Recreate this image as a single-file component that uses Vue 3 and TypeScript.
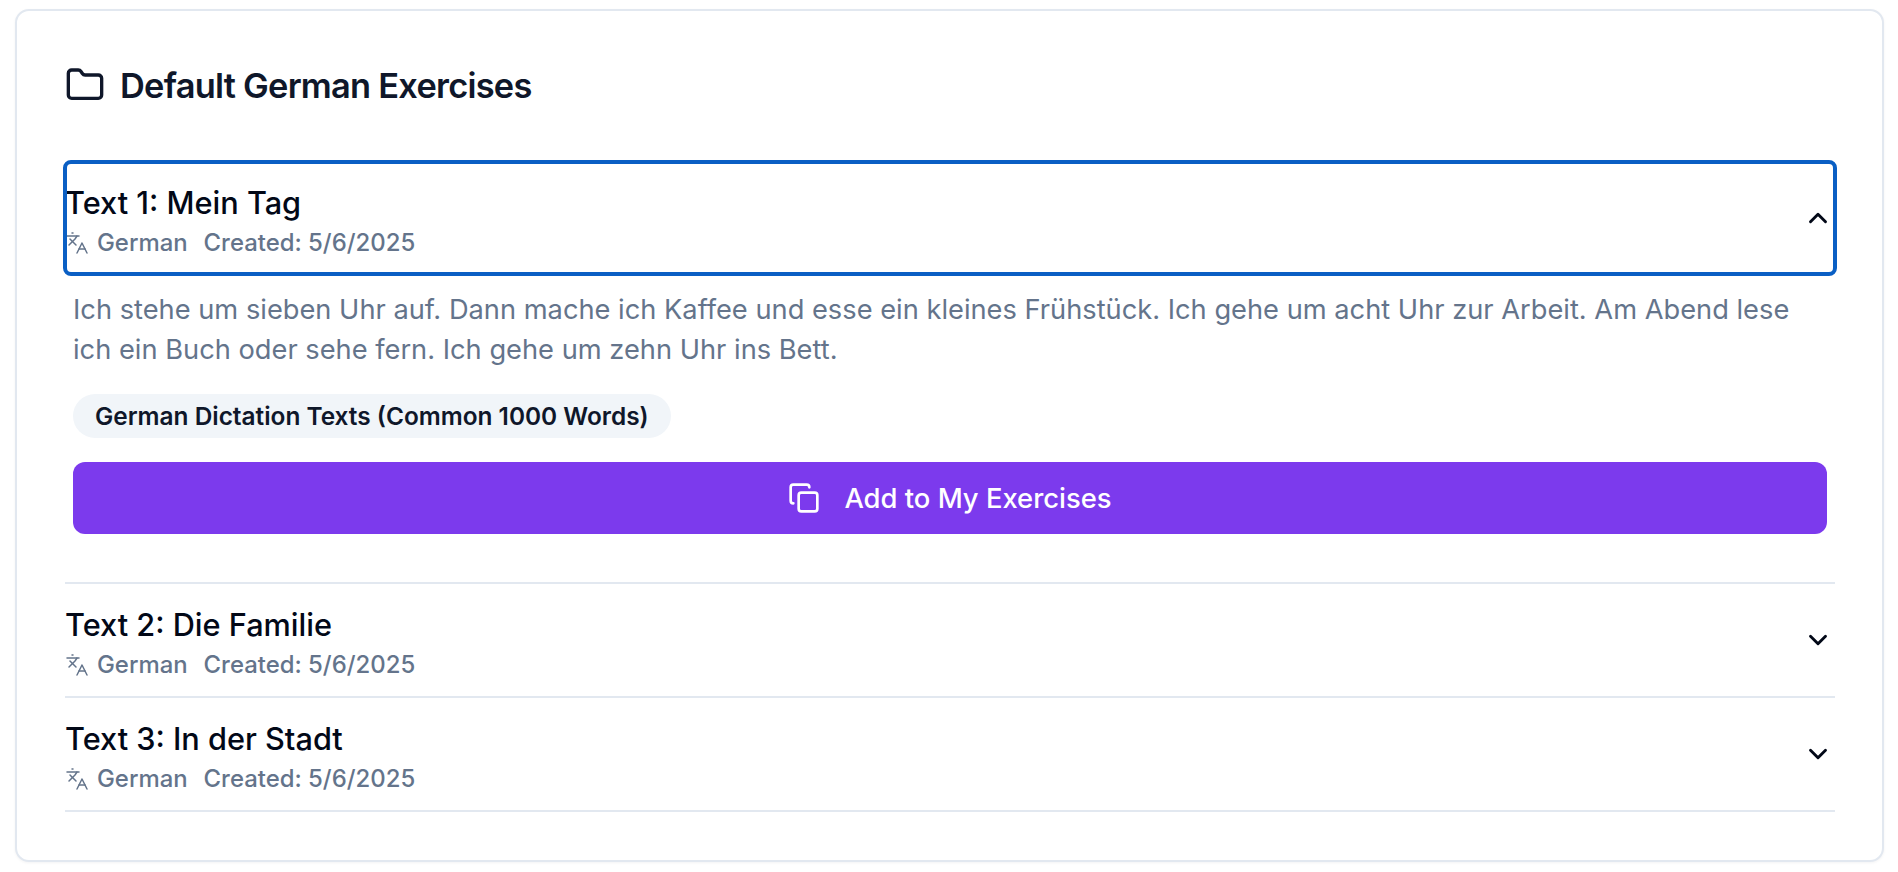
<script setup lang="ts">
interface Exercise {
  title: string
  open: boolean
}
const exercises: Exercise[] = [
  { title: 'Text 1: Mein Tag', open: true },
  { title: 'Text 2: Die Familie', open: false },
  { title: 'Text 3: In der Stadt', open: false },
]
</script>

<template>
  <main class="page">
    <section class="card">
      <h2 class="heading">
        <svg class="folder" viewBox="0 0 24 24" fill="none" stroke="currentColor" stroke-width="2" stroke-linecap="round" stroke-linejoin="round">
          <path d="M20 20a2 2 0 0 0 2-2V8a2 2 0 0 0-2-2h-7.9a2 2 0 0 1-1.69-.9L9.6 3.9A2 2 0 0 0 7.93 3H4a2 2 0 0 0-2 2v13a2 2 0 0 0 2 2Z" />
        </svg>
        <span>Default German Exercises</span>
      </h2>
      <div class="accordion">
        <div v-for="ex in exercises" :key="ex.title" class="item">
          <button class="trigger" :class="{ focused: ex.open }" type="button">
            <span class="info">
              <span class="title">{{ ex.title }}</span>
              <span class="meta">
                <svg class="lang" viewBox="0 0 24 24" fill="none" stroke="currentColor" stroke-width="2" stroke-linecap="round" stroke-linejoin="round">
                  <path d="m5 8 6 6" />
                  <path d="m4 14 6-6 2-3" />
                  <path d="M2 5h12" />
                  <path d="M7 2h1" />
                  <path d="m22 22-5-10-5 10" />
                  <path d="M14 18h6" />
                </svg>
                <span class="lang-name">German</span>
                <span>Created: 5/6/2025</span>
              </span>
            </span>
            <svg class="chevron" viewBox="0 0 24 24" fill="none" stroke="currentColor" stroke-width="2.3" stroke-linecap="round" stroke-linejoin="round">
              <path :d="ex.open ? 'm18 15-6-6-6 6' : 'm6 9 6 6 6-6'" />
            </svg>
          </button>
          <div v-if="ex.open" class="content">
            <p class="text">Ich stehe um sieben Uhr auf. Dann mache ich Kaffee und esse ein kleines Frühstück. Ich gehe um acht Uhr zur Arbeit. Am Abend lese ich ein Buch oder sehe fern. Ich gehe um zehn Uhr ins Bett.</p>
            <span class="badge">German Dictation Texts (Common 1000 Words)</span>
            <button class="add" type="button">
              <svg class="copy" viewBox="0 0 24 24" fill="none" stroke="currentColor" stroke-width="2" stroke-linecap="round" stroke-linejoin="round">
                <rect x="8" y="8" width="14" height="14" rx="2" ry="2" />
                <path d="M4 16c-1.1 0-2-.9-2-2V4c0-1.1.9-2 2-2h10c1.1 0 2 .9 2 2" />
              </svg>
              <span>Add to My Exercises</span>
            </button>
          </div>
        </div>
      </div>
    </section>
  </main>
</template>

<style>
html, body {
  background: #ffffff;
}
</style>

<style scoped>
.page {
  padding: 8.5px 14px 10px 15px;
  font-family: Inter, "Noto Sans", sans-serif;
  box-sizing: border-box;
}
.card {
  box-sizing: border-box;
  height: 853.5px;
  padding: 54.8px 47px 0 48px;
  background: #ffffff;
  border: 2px solid #e2e8f0;
  border-radius: 14px;
  box-shadow: 0 1px 3px rgba(15, 23, 42, 0.05);
}
.heading {
  display: flex;
  align-items: center;
  gap: 15px;
  margin: 0 0 56.7px;
  height: 40px;
  font-size: 34.4px;
  font-weight: 600;
  letter-spacing: -0.75px;
  color: #0f172a;
}
.folder {
  width: 40px;
  height: 40px;
  flex: none;
}
.item {
  border-bottom: 2px solid #e2e8f0;
}
.trigger {
  display: flex;
  width: 100%;
  height: 112px;
  align-items: center;
  justify-content: space-between;
  padding: 0 2px 0 0;
  background: none;
  border: 0;
  border-radius: 6px;
  font-family: inherit;
  color: #020817;
  text-align: left;
}
.trigger.focused {
  outline: 4px solid #0a5fc4;
  outline-offset: -2px;
}
.info {
  display: flex;
  flex-direction: column;
  gap: 8px;
  padding-top: 6px;
}
.title {
  font-size: 30.7px;
  line-height: 36px;
  font-weight: 500;
  color: #020817;
}
.meta {
  display: flex;
  align-items: center;
  font-size: 23.9px;
  line-height: 28px;
  font-weight: 500;
  color: #64748b;
}
.lang {
  width: 24px;
  height: 24px;
  margin-right: 8px;
  flex: none;
  stroke-width: 1.5;
}
.lang-name {
  margin-right: 16px;
}
.chevron {
  width: 30px;
  height: 30px;
  flex: none;
}
.content {
  display: flex;
  flex-direction: column;
  align-items: flex-start;
  padding: 16px 8px 48px;
}
.text {
  margin: 0 0 24px;
  font-size: 27.25px;
  line-height: 40px;
  color: #64748b;
}
.badge {
  display: inline-flex;
  align-items: center;
  height: 44px;
  padding: 0 22px;
  border-radius: 22px;
  background: #f1f5f9;
  font-size: 24.4px;
  font-weight: 600;
  color: #0f172a;
}
.add {
  display: flex;
  align-items: center;
  justify-content: center;
  gap: 24px;
  width: 100%;
  height: 72px;
  margin-top: 24px;
  border: 0;
  border-radius: 12px;
  background: #7c3aed;
  color: #ffffff;
  font-family: inherit;
  font-size: 27.4px;
  font-weight: 500;
}
.copy {
  width: 32px;
  height: 32px;
  flex: none;
}
</style>
